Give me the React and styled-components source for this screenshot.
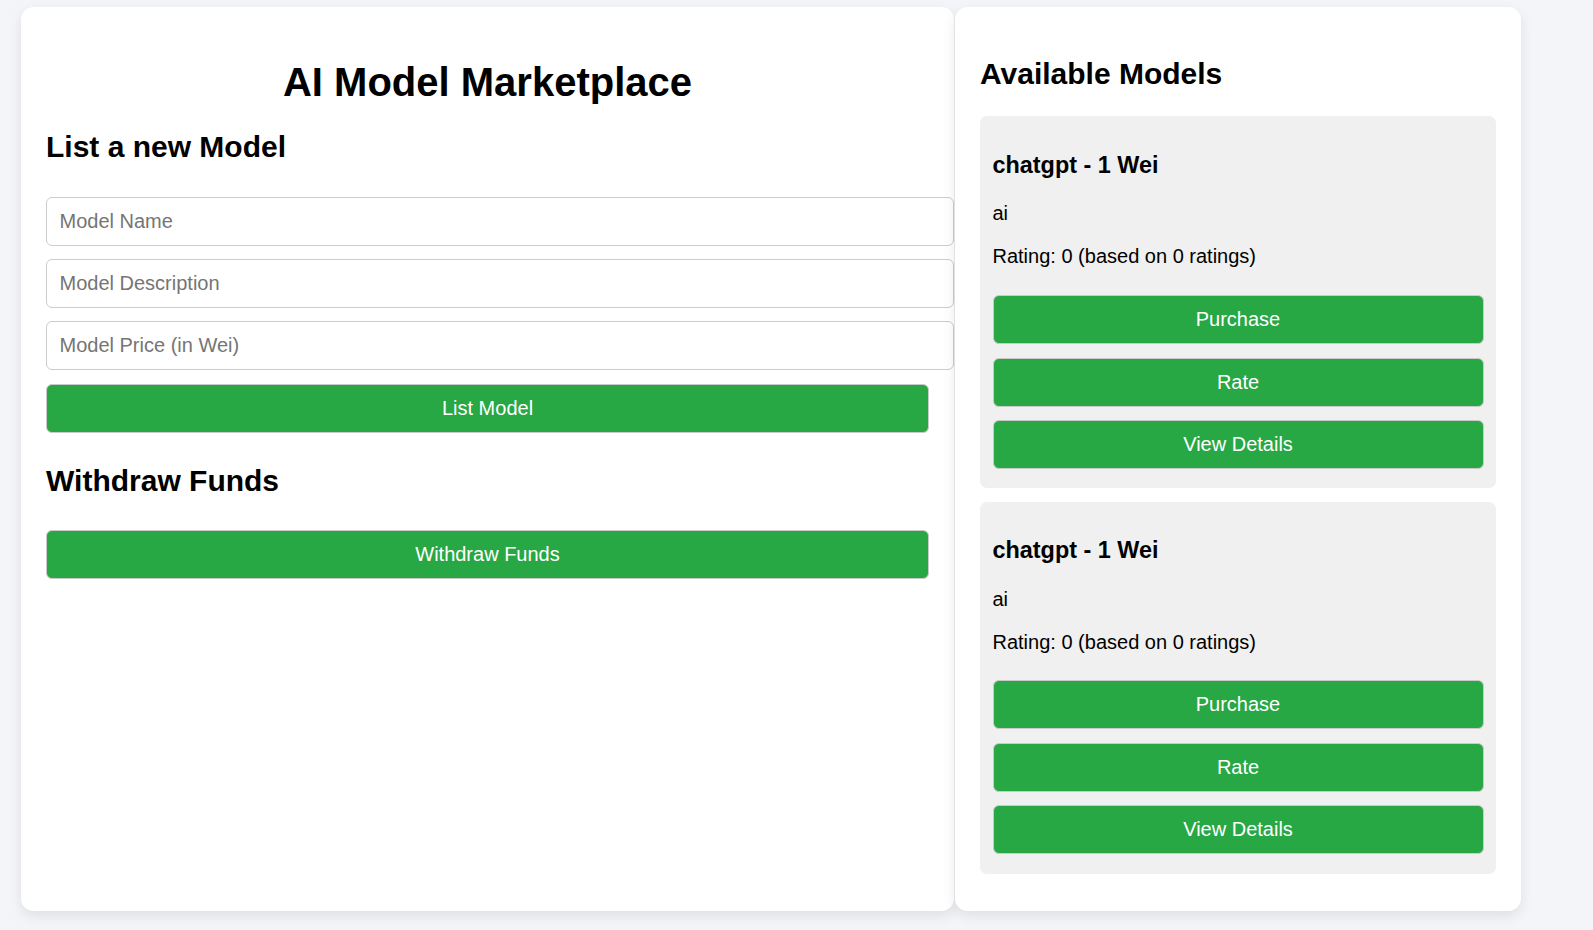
import React from "react";
import styled, { createGlobalStyle } from "styled-components";

const GlobalStyle = createGlobalStyle`
  * { box-sizing: border-box; }
  html, body { margin: 0; padding: 0; }
  body {
    background: #f4f5f9;
    font-family: "Liberation Sans", Arial, sans-serif;
    color: #000;
  }
`;

const Page = styled.div`
  display: flex;
  align-items: stretch;
  gap: 1px;
  padding: 7px 0 20px 21px;
`;

const Card = styled.section`
  display: flex;
  flex-direction: column;
  width: ${(p) => p.$width}px;
  flex-shrink: 0;
  background: #fff;
  border-radius: 12.5px;
  box-shadow: 0 5px 14px rgba(0, 0, 0, 0.09);
  padding: 25px;
`;

const Title = styled.h1`
  margin: 26.8px 0 0;
  font-size: 40px;
  line-height: 46px;
  font-weight: 700;
  text-align: center;
`;

const Heading = styled.h2`
  margin: ${(p) => p.$top}px 0 0;
  font-size: 30px;
  line-height: 34px;
  font-weight: 700;
`;

const Input = styled.input`
  display: block;
  width: calc(100% + 25px);
  height: 49px;
  margin: ${(p) => p.$top}px 0 0;
  padding: 12px 12.5px;
  border: 1px solid #ccc;
  border-radius: 6px;
  font-family: inherit;
  font-size: 20px;
  line-height: 23px;
  color: #000;
  background: #fff;
  outline: none;
  &::placeholder { color: #757575; }
`;

const GreenButton = styled.button`
  display: block;
  width: 100%;
  height: 49px;
  margin: ${(p) => p.$top}px 0 0;
  padding: 12px 12.5px;
  border: 1px solid #c8cbc8;
  border-radius: 6px;
  background: #28a745;
  color: #fff;
  font-family: inherit;
  font-size: 20px;
  line-height: 23px;
  text-align: center;
  cursor: pointer;
`;

const ModelItem = styled.article`
  display: flex;
  flex-direction: column;
  margin-top: ${(p) => p.$top}px;
  margin-bottom: 12.5px;
  padding: 12.5px 12.5px 19.4px;
  background: #f0f0f0;
  border-radius: 7px;
`;

const ModelName = styled.h3`
  margin: 23.4px 0 0;
  font-size: 23.4px;
  line-height: 27px;
  font-weight: 700;
`;

const ModelText = styled.p`
  margin: ${(p) => p.$top}px 0 0;
  font-size: 20px;
  line-height: 23px;
`;

const models = [
  { name: "chatgpt", price: 1, description: "ai", rating: 0, count: 0 },
  { name: "chatgpt", price: 1, description: "ai", rating: 0, count: 0 },
];

export default function App() {
  return (
    <>
      <GlobalStyle />
      <Page>
        <Card $width={933}>
          <Title>AI Model Marketplace</Title>
          <Heading $top={25}>List a new Model</Heading>
          <Input $top={33} placeholder="Model Name" />
          <Input $top={13.5} placeholder="Model Description" />
          <Input $top={13} placeholder="Model Price (in Wei)" />
          <GreenButton $top={14}>List Model</GreenButton>
          <Heading $top={30.8}>Withdraw Funds</Heading>
          <GreenButton $top={32.2}>Withdraw Funds</GreenButton>
        </Card>
        <Card $width={566}>
          <Heading $top={24.9}>Available Models</Heading>
          {models.map((m, i) => (
            <ModelItem key={i} $top={i === 0 ? 25 : 1}>
              <ModelName>
                {m.name} - {m.price} Wei
              </ModelName>
              <ModelText $top={23.4}>{m.description}</ModelText>
              <ModelText $top={20}>
                Rating: {m.rating} (based on {m.count} ratings)
              </ModelText>
              <GreenButton $top={26.5}>Purchase</GreenButton>
              <GreenButton $top={14}>Rate</GreenButton>
              <GreenButton $top={13}>View Details</GreenButton>
            </ModelItem>
          ))}
        </Card>
      </Page>
    </>
  );
}
